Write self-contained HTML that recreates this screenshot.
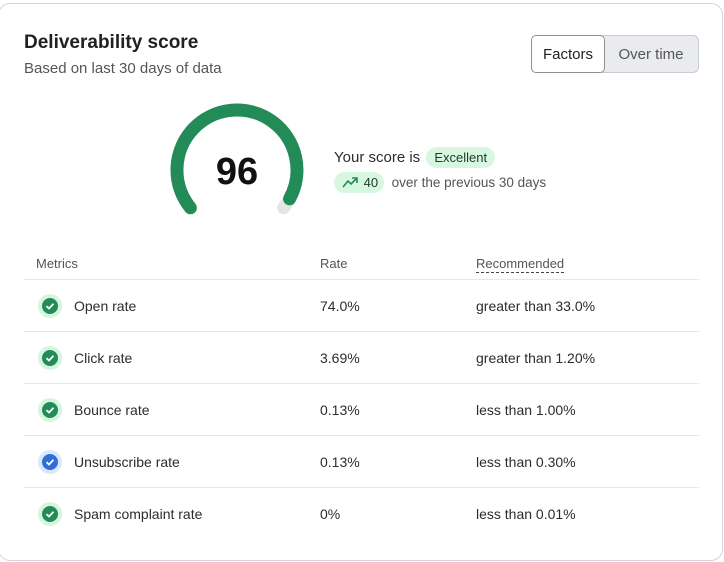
<!DOCTYPE html>
<html><head><style>
*{box-sizing:border-box;margin:0;padding:0}
body{width:724px;height:562px;background:#fff;font-family:"Liberation Sans",sans-serif;color:#1f2124;position:relative;overflow:hidden}
.card{position:absolute;left:-2px;top:3px;width:725px;height:558px;border:1px solid #d3d5d8;border-radius:12px}
.t{position:absolute;white-space:nowrap}
.btns{position:absolute;left:531px;top:35px;height:38px;width:168px;border:1px solid #c9ccd0;border-radius:6px;background:#e9ebee;display:flex;font-size:15px}
.b1{width:74px;background:#fff;border:1px solid #8d9196;border-radius:5px;margin:-1px;display:flex;align-items:center;justify-content:center;color:#222}
.b2{flex:1;display:flex;align-items:center;justify-content:center;color:#555}
.pill{display:inline-block;background:#d7f7e1;border-radius:12px;padding:3px 8px;font-size:13px;color:#1d3a28}
.line{position:absolute;left:24px;width:675px;height:1px;background:#e6e8ea}
.ic{position:absolute;left:38px;width:24px;height:24px;border-radius:50%;background:#d5f5df}
.ic i{position:absolute;left:4px;top:4px;width:16px;height:16px;border-radius:50%;background:#238b57}
.ic.blue{background:#d9e8fb}.ic.blue i{background:#2f6fd6}
.ic svg{position:absolute;left:4px;top:4px}
.row{font-size:14px;color:#2a2c2f}
</style></head><body>
<div class="card"></div>
<div class="t" style="left:24px;top:32px;font-size:19px;font-weight:bold;color:#202124">Deliverability score</div>
<div class="t" style="left:24px;top:60px;font-size:15px;color:#555">Based on last 30 days of data</div>
<div class="btns"><div class="b1">Factors</div><div class="b2">Over time</div></div>
<svg style="position:absolute;left:0;top:0" width="724" height="240">
<path d="M289.6 198.8 A60 60 0 0 1 283.6 207.8" fill="none" stroke="#e3e5e8" stroke-width="13" stroke-linecap="round"/>
<path d="M190.4 207.8 A60 60 0 1 1 289.6 198.8" fill="none" stroke="#238b57" stroke-width="13" stroke-linecap="round"/>
<text x="237" y="184" text-anchor="middle" font-family="Liberation Sans" font-weight="bold" font-size="38" fill="#111">96</text>
</svg>
<div class="t" style="left:334px;top:147px;font-size:15px;color:#2a2c2f">Your score is <span class="pill" style="margin-left:2px">Excellent</span></div>
<div class="t" style="left:334px;top:172px;font-size:13.5px;color:#555"><span class="pill" style="padding:3px 6px 3px 8px"><svg width="18" height="12" viewBox="0 0 18 12" style="vertical-align:-1px"><path d="M1 11 L6 5 L9 8 L15 2 M10 2 H15 V7" fill="none" stroke="#238b57" stroke-width="1.6"/></svg> 40</span>&nbsp; over the previous 30 days</div>
<div class="t" style="left:36px;top:256px;font-size:13px;color:#555">Metrics</div>
<div class="t" style="left:320px;top:256px;font-size:13px;color:#555">Rate</div>
<div class="t" style="left:476px;top:256px;font-size:13px;color:#555;border-bottom:1px dashed #444;padding-bottom:1px">Recommended</div>
<div class="line" style="top:279px"></div>
<div class="line" style="top:331px"></div>
<div class="line" style="top:383px"></div>
<div class="line" style="top:435px"></div>
<div class="line" style="top:487px"></div>

<div class="ic" style="top:294px"><i></i><svg width="16" height="16"><path d="M4.5 8.2 L7 10.5 L11.5 5.8" fill="none" stroke="#fff" stroke-width="1.8"/></svg></div>
<div class="t row" style="left:74px;top:298px">Open rate</div>
<div class="t row" style="left:320px;top:298px">74.0%</div>
<div class="t row" style="left:476px;top:298px">greater than 33.0%</div>

<div class="ic" style="top:346px"><i></i><svg width="16" height="16"><path d="M4.5 8.2 L7 10.5 L11.5 5.8" fill="none" stroke="#fff" stroke-width="1.8"/></svg></div>
<div class="t row" style="left:74px;top:350px">Click rate</div>
<div class="t row" style="left:320px;top:350px">3.69%</div>
<div class="t row" style="left:476px;top:350px">greater than 1.20%</div>

<div class="ic" style="top:398px"><i></i><svg width="16" height="16"><path d="M4.5 8.2 L7 10.5 L11.5 5.8" fill="none" stroke="#fff" stroke-width="1.8"/></svg></div>
<div class="t row" style="left:74px;top:402px">Bounce rate</div>
<div class="t row" style="left:320px;top:402px">0.13%</div>
<div class="t row" style="left:476px;top:402px">less than 1.00%</div>

<div class="ic blue" style="top:450px"><i></i><svg width="16" height="16"><path d="M4.5 8.2 L7 10.5 L11.5 5.8" fill="none" stroke="#fff" stroke-width="1.8"/></svg></div>
<div class="t row" style="left:74px;top:454px">Unsubscribe rate</div>
<div class="t row" style="left:320px;top:454px">0.13%</div>
<div class="t row" style="left:476px;top:454px">less than 0.30%</div>

<div class="ic" style="top:502px"><i></i><svg width="16" height="16"><path d="M4.5 8.2 L7 10.5 L11.5 5.8" fill="none" stroke="#fff" stroke-width="1.8"/></svg></div>
<div class="t row" style="left:74px;top:506px">Spam complaint rate</div>
<div class="t row" style="left:320px;top:506px">0%</div>
<div class="t row" style="left:476px;top:506px">less than 0.01%</div>
</body></html>
